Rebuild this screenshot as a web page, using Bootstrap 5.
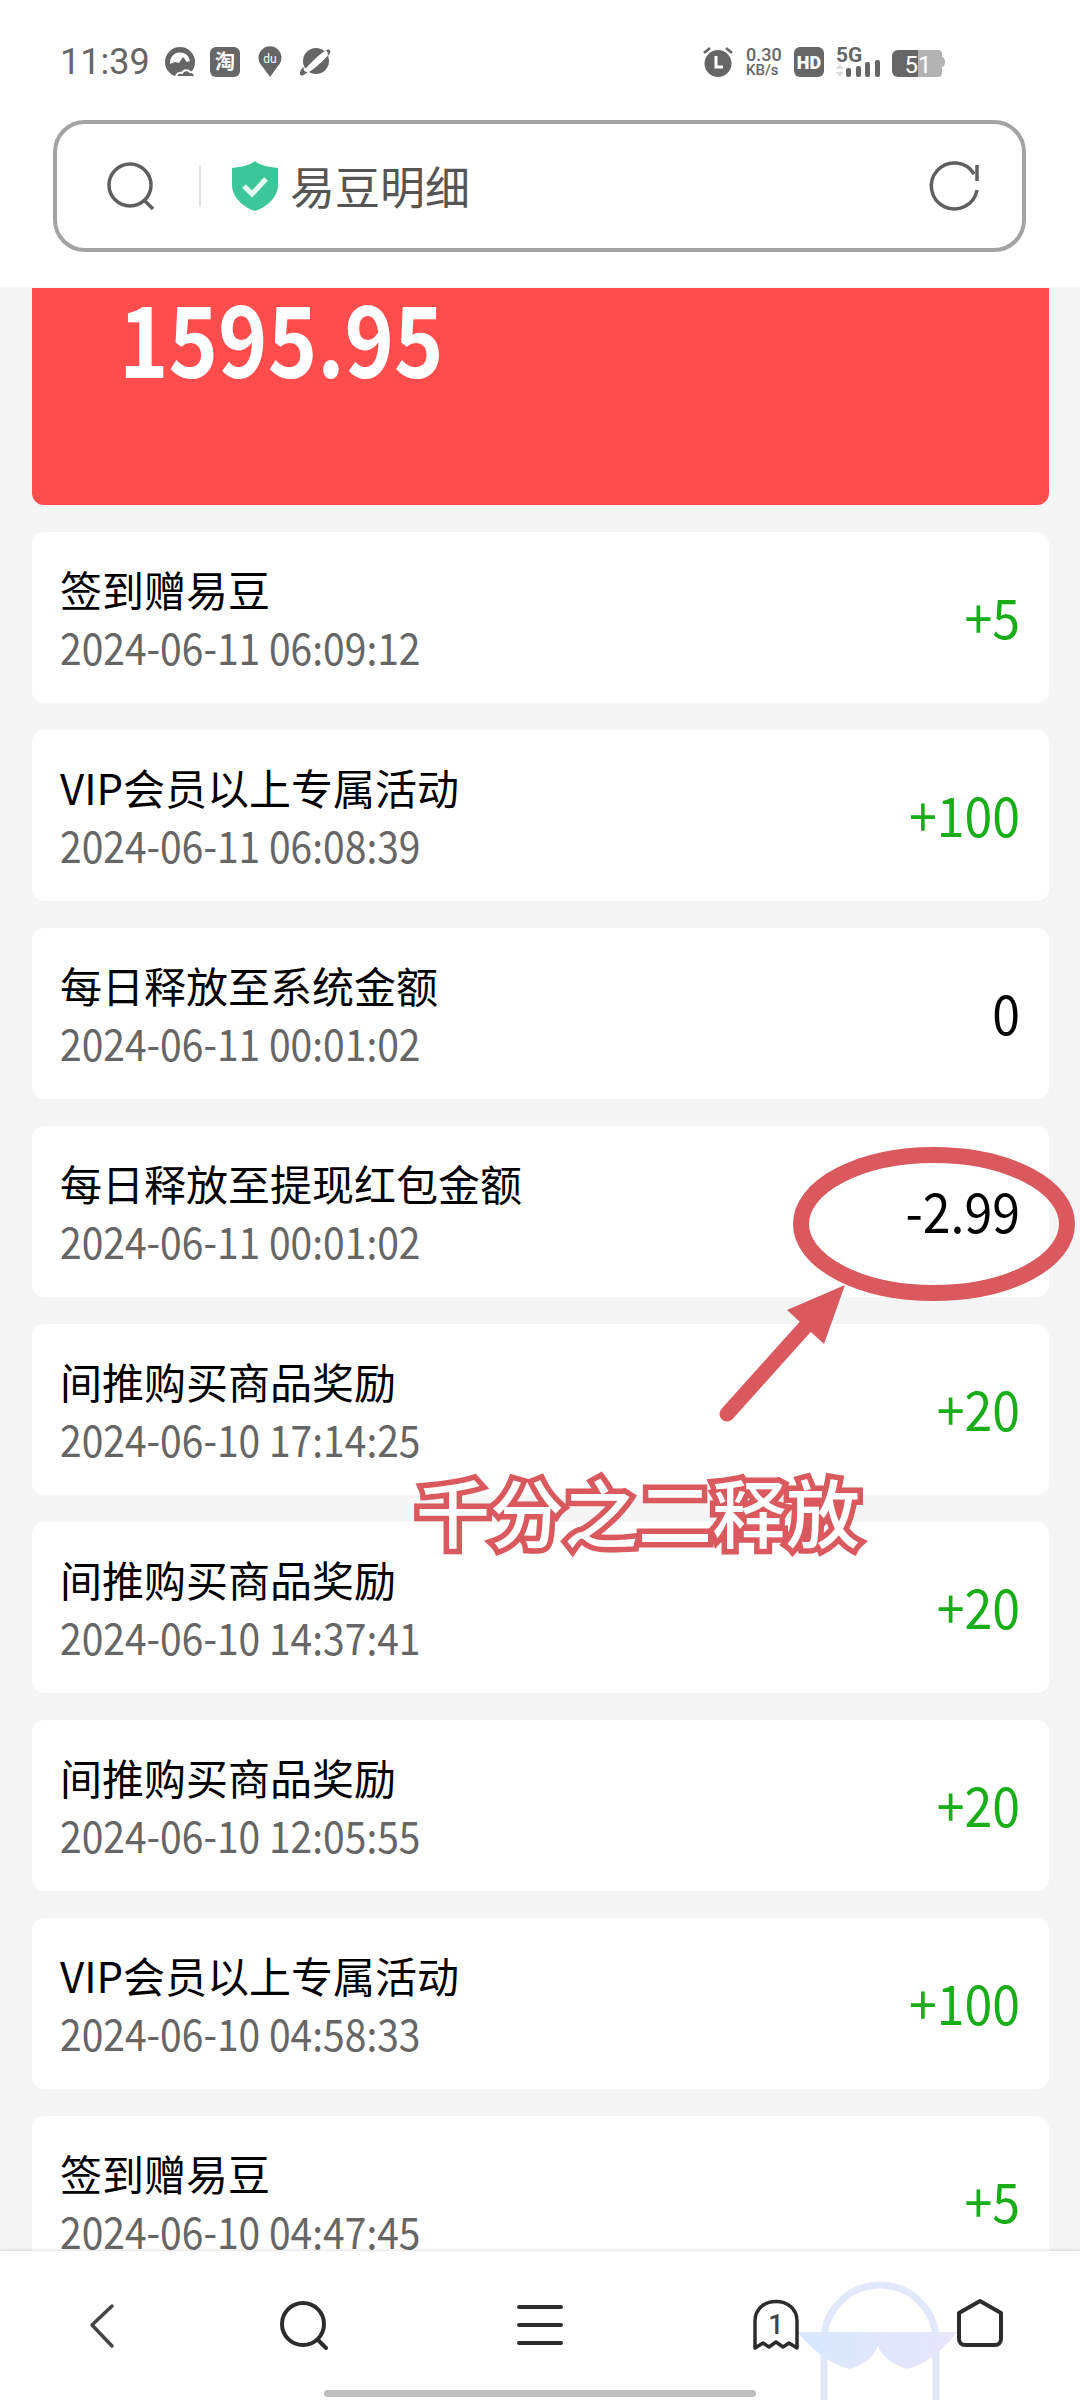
<!DOCTYPE html>
<html lang="en">
<head>
  <meta charset="UTF-8">
  <title>易豆明细</title>
  <meta name="viewport" content="width=device-width, initial-scale=1">
  <link href="https://cdn.jsdelivr.net/npm/bootstrap@5.3.2/dist/css/bootstrap.min.css" rel="stylesheet" />
  <style>
    body {
      width: 1080px;
      height: 2400px;
      overflow: hidden;
      background-color: #f5f5f5;
      font-family: "Noto Sans CJK SC", sans-serif;
      color: #000;
    }
    svg { overflow: visible; flex-shrink: 0; }
    .page-head { height: 287px; padding: 47px 54px 0 53px; }
    .status-row { height: 30px; padding: 0 81px 0 7px; color: #666; gap: 15px; }
    .clock { font: 400 36px/30px Roboto, sans-serif; width: 90px; }
    .status-right { gap: 12px; }
    .speed { width: 36px; font: 500 18px/16px Roboto, sans-serif; white-space: nowrap; }
    .speed small { display: block; font-size: 15px; line-height: 14px; }
    .addr-box {
      height: 132px;
      margin-top: 43px;
      padding: 0 44px 0 50px;
      border: 4px solid #a3a3a3;
      border-radius: 32px;
    }
    .addr-sep { width: 2px; height: 42px; margin: 0 31px 0 44px; background: #e2e2e2; }
    .addr-title { margin-left: 12px; font-size: 45px; line-height: 50px; color: #555; }
    .page-main { height: 1964px; overflow: hidden; padding: 1px 31px 0 32px; }
    .red-panel {
      height: 217px;
      padding: 8px 0 0 87px;
      margin-bottom: 27px;
      background: #ff4d4d;
      border-radius: 0 0 12px 12px;
      color: #fff;
    }
    .balance {
      display: block;
      width: fit-content;
      font-size: 84px;
      line-height: 80px;
      font-weight: 700;
      transform: scaleY(1.18);
    }
    .log-row {
      height: 171px;
      margin-bottom: 27px;
      padding: 0 29px 0 28px;
      background: #fff;
      border-radius: 12px;
    }
    .log-title { font-size: 42px; line-height: 58px; }
    .log-time {
      display: block;
      margin-top: -1px;
      font-size: 39px;
      line-height: 58px;
      color: #666;
      transform: scaleY(1.1);
    }
    .log-amount {
      display: inline-block;
      margin-bottom: 5px;
      font-size: 50px;
      line-height: 60px;
      transform: scaleY(1.08);
    }
    .amount-green { color: #1aad19; }
    .page-foot {
      height: 149px;
      background: #fff;
      box-shadow: 0 -1px 3px rgba(0, 0, 0, .12);
      position: relative;
      padding: 48px 0 0 90px;
    }
    .home-pill {
      position: absolute;
      left: 324px;
      bottom: 3px;
      width: 432px;
      height: 7px;
      border-radius: 4px;
      background: #bfbfbf;
    }
    .float-ghost { position: absolute; left: 790px; top: 30px; }
    .foot-back { margin-top: 5px; }
    .foot-search { margin: 2px 0 0 166px; }
    .foot-menu { margin: 6px 0 0 190px; }
    .foot-tabs { margin-left: 191px; }
    .foot-home { margin-left: 158px; }
    .mark-layer { position: absolute; left: 0; top: 0; pointer-events: none; }
    .mark-text {
      position: absolute;
      left: 416px;
      top: 1464px;
      font-size: 74px;
      line-height: 92px;
      font-weight: 500;
      white-space: nowrap;
      color: #fff;
      -webkit-text-stroke: 11px #d9595e;
      paint-order: stroke fill;
    }
  </style>
</head>
<body>

<header class="page-head bg-white">
  <div class="status-row d-flex align-items-center">
    <span class="clock">11:39</span>
    <svg width="30" height="30" viewBox="0 0 30 30"><circle cx="15" cy="15" r="15" fill="#666"/><path d="M5 17a10 10 0 0 1 20-3l-3 1-4-5-4 6-4-1z" fill="#fff"/><path d="M11 30c0-3 3-5 6-4 1-3 6-4 8-1 3 0 5 2 5 5z" fill="#666" stroke="#fff" stroke-width="2"/></svg>
    <svg width="30" height="30" viewBox="0 0 30 30"><rect width="30" height="30" rx="6" fill="#666"/><text x="15" y="22" text-anchor="middle" font-size="20" font-weight="700" fill="#fff" font-family="Noto Sans CJK SC">淘</text></svg>
    <svg width="30" height="30" viewBox="0 0 30 30"><path d="M15 30L7 19A11.500 11.500 0 1 1 23 19z" fill="#666"/><text x="15" y="16" text-anchor="middle" font-size="12" fill="#fff" font-family="Roboto">du</text></svg>
    <svg width="30" height="30" viewBox="0 0 30 30"><circle cx="16" cy="14" r="13" fill="#666"/><path d="M3 24C-3 31 8 27 16 20S33 5 28 3C22 4 14 13 3 24z" fill="#fff"/><path d="M0 27C0 22 3 21 4 20 3 24 5 25 8 25 4 28 1 30 0 27zM26 3c3-1 5-1 4 3l-2 3c0-3-1-5-2-6z" fill="#666"/></svg>
    <div class="status-right d-flex align-items-center ms-auto">
      <svg width="32" height="30" viewBox="0 0 32 30"><circle cx="16" cy="16.500" r="13.500" fill="#666"/><path d="M14 9v11h7" fill="none" stroke="#fff" stroke-width="3"/><path d="M2 6l6-5M30 6l-6-5" stroke="#666" stroke-width="2.500"/></svg>
      <div class="speed">0.30<small>KB/s</small></div>
      <svg width="30" height="30" viewBox="0 0 30 30"><rect width="30" height="30" rx="6" fill="#666"/><text x="15" y="22" text-anchor="middle" font-size="18" font-weight="900" fill="#fff" font-family="Roboto">HD</text></svg>
      <svg width="44" height="30" viewBox="0 0 44 30"><text x="0" y="15" font-size="21" font-weight="700" fill="#666" font-family="Roboto">5G</text><path d="M4 17l4 5H0zM4 30l4-5H0z" fill="#ddd"/><rect x="10" y="21" width="5" height="9" rx="2" fill="#666"/><rect x="20" y="19" width="5" height="11" rx="2" fill="#666"/><rect x="29" y="15" width="5" height="15" rx="2" fill="#666"/><rect x="39" y="13" width="5" height="17" rx="2" fill="#666"/></svg>
      <svg width="53" height="30" viewBox="0 0 53 30"><path d="M26 3H6a6 6 0 0 0-6 6v15a6 6 0 0 0 6 6h20z" fill="#666"/><path d="M26 3h20a4 4 0 0 1 4 4v3a3 5 0 0 1 3 5 3 5 0 0 1-3 5v6a4 4 0 0 1-4 4H26z" fill="#b3b3b3"/><text x="26" y="26" text-anchor="middle" font-size="24" fill="#fff" font-family="Roboto">51</text></svg>
    </div>
  </div>
  <div class="addr-box d-flex align-items-center">
    <svg width="48" height="48" viewBox="0 0 48 48"><circle cx="23" cy="23" r="21" fill="none" stroke="#5f5f5f" stroke-width="3.500"/><path d="M37 38l9 9" stroke="#5f5f5f" stroke-width="3.500"/></svg>
    <span class="addr-sep"></span>
    <svg width="46" height="50" viewBox="0 0 46 50"><path d="M23 0c5 4 13 6 23 7v17c0 12-11 22-23 26C11 46 0 36 0 24V7C10 6 18 4 23 0z" fill="#3cc79a"/><path d="M12 25l8 8 14-15" fill="none" stroke="#e8fff6" stroke-width="5"/></svg>
    <span class="addr-title">易豆明细</span>
    <svg class="ms-auto" width="48" height="48" viewBox="0 0 48 48"><path d="M47 28A23 23 0 1 1 44 12" fill="none" stroke="#5f5f5f" stroke-width="3.500"/><path d="M47 3v16" stroke="#5f5f5f" stroke-width="3.500"/></svg>
  </div>
</header>

<main class="page-main">
  <div class="red-panel"><span class="balance">1595.95</span></div>
  <div id="log-list"></div>
</main>

<footer class="page-foot">
  <svg class="float-ghost" width="180" height="119" viewBox="0 0 180 119">
    <defs><linearGradient id="ghostFill" x1="0" x2="1" gradientUnits="objectBoundingBox"><stop offset="0" stop-color="#d8e8fd"/><stop offset="1" stop-color="#e8e6fb"/></linearGradient></defs>
    <path d="M34 119V60A56 56 0 0 1 146 60V119" fill="none" stroke="#e2e8fc" stroke-width="7"/>
    <path d="M8 51H167C155 68 135 84 117 88 105 84 93 78 88 65 83 78 72 84 60 88 42 84 20 68 8 51z" fill="url(#ghostFill)"/>
  </svg>
  <div class="d-flex align-items-start position-relative">
    <svg class="foot-back" width="24" height="44" viewBox="0 0 24 44"><path d="M22 2L2 21l20 21" fill="none" stroke="#444" stroke-width="3.500" stroke-linecap="round" stroke-linejoin="round"/></svg>
    <svg class="foot-search" width="48" height="48" viewBox="0 0 48 48"><circle cx="23" cy="23" r="21" fill="none" stroke="#2c2c2c" stroke-width="4"/><path d="M38 39l8 8" stroke="#2c2c2c" stroke-width="4" stroke-linecap="round"/></svg>
    <svg class="foot-menu" width="44" height="40" viewBox="0 0 44 40"><path d="M1 2h42M1 20h42M1 38h42" fill="none" stroke="#2c2c2c" stroke-width="4" stroke-linecap="round"/></svg>
    <svg class="foot-tabs" width="46" height="52" viewBox="0 0 46 52"><path d="M2 49V22C2 -4 44 -4 44 22V49L36 44 30 48 23 43 16 48 10 44z" fill="#fff" stroke="#2c2c2c" stroke-width="3.500" stroke-linejoin="round"/><text x="23" y="35" text-anchor="middle" font-size="27" font-weight="500" fill="#444" font-family="Roboto">1</text></svg>
    <svg class="foot-home" width="46" height="48" viewBox="0 0 46 48"><path d="M23 2L44 14V40a6 6 0 0 1-6 6H8a6 6 0 0 1-6-6V14z" fill="#fff" stroke="#2c2c2c" stroke-width="4" stroke-linejoin="round"/></svg>
  </div>
  <div class="home-pill"></div>
</footer>

<svg class="mark-layer" width="1080" height="2400" viewBox="0 0 1080 2400">
  <ellipse cx="934" cy="1224" rx="133" ry="69" fill="none" stroke="#d9595e" stroke-width="16"/>
  <path d="M727 1414L806 1326" stroke="#d9595e" stroke-width="15" stroke-linecap="round"/>
  <path d="M845 1285L787 1310 824 1344z" fill="#d9595e"/>
</svg>
<div class="mark-text">千分之二释放</div>

<script>
  const logs = [
    ['签到赠易豆', '2024-06-11 06:09:12', '+5'],
    ['VIP会员以上专属活动', '2024-06-11 06:08:39', '+100'],
    ['每日释放至系统金额', '2024-06-11 00:01:02', '0'],
    ['每日释放至提现红包金额', '2024-06-11 00:01:02', '-2.99'],
    ['间推购买商品奖励', '2024-06-10 17:14:25', '+20'],
    ['间推购买商品奖励', '2024-06-10 14:37:41', '+20'],
    ['间推购买商品奖励', '2024-06-10 12:05:55', '+20'],
    ['VIP会员以上专属活动', '2024-06-10 04:58:33', '+100'],
    ['签到赠易豆', '2024-06-10 04:47:45', '+5']
  ];

  const list = document.getElementById('log-list');
  logs.forEach((item) => {
    const green = item[2].startsWith('+') ? 'amount-green' : '';
    const row = document.createElement('div');
    row.className = 'log-row d-flex justify-content-between align-items-center';
    row.innerHTML = `
      <div>
        <div class="log-title">${item[0]}</div>
        <span class="log-time">${item[1]}</span>
      </div>
      <span class="log-amount ${green}">${item[2]}</span>
    `;
    list.appendChild(row);
  });
</script>

</body>
</html>
